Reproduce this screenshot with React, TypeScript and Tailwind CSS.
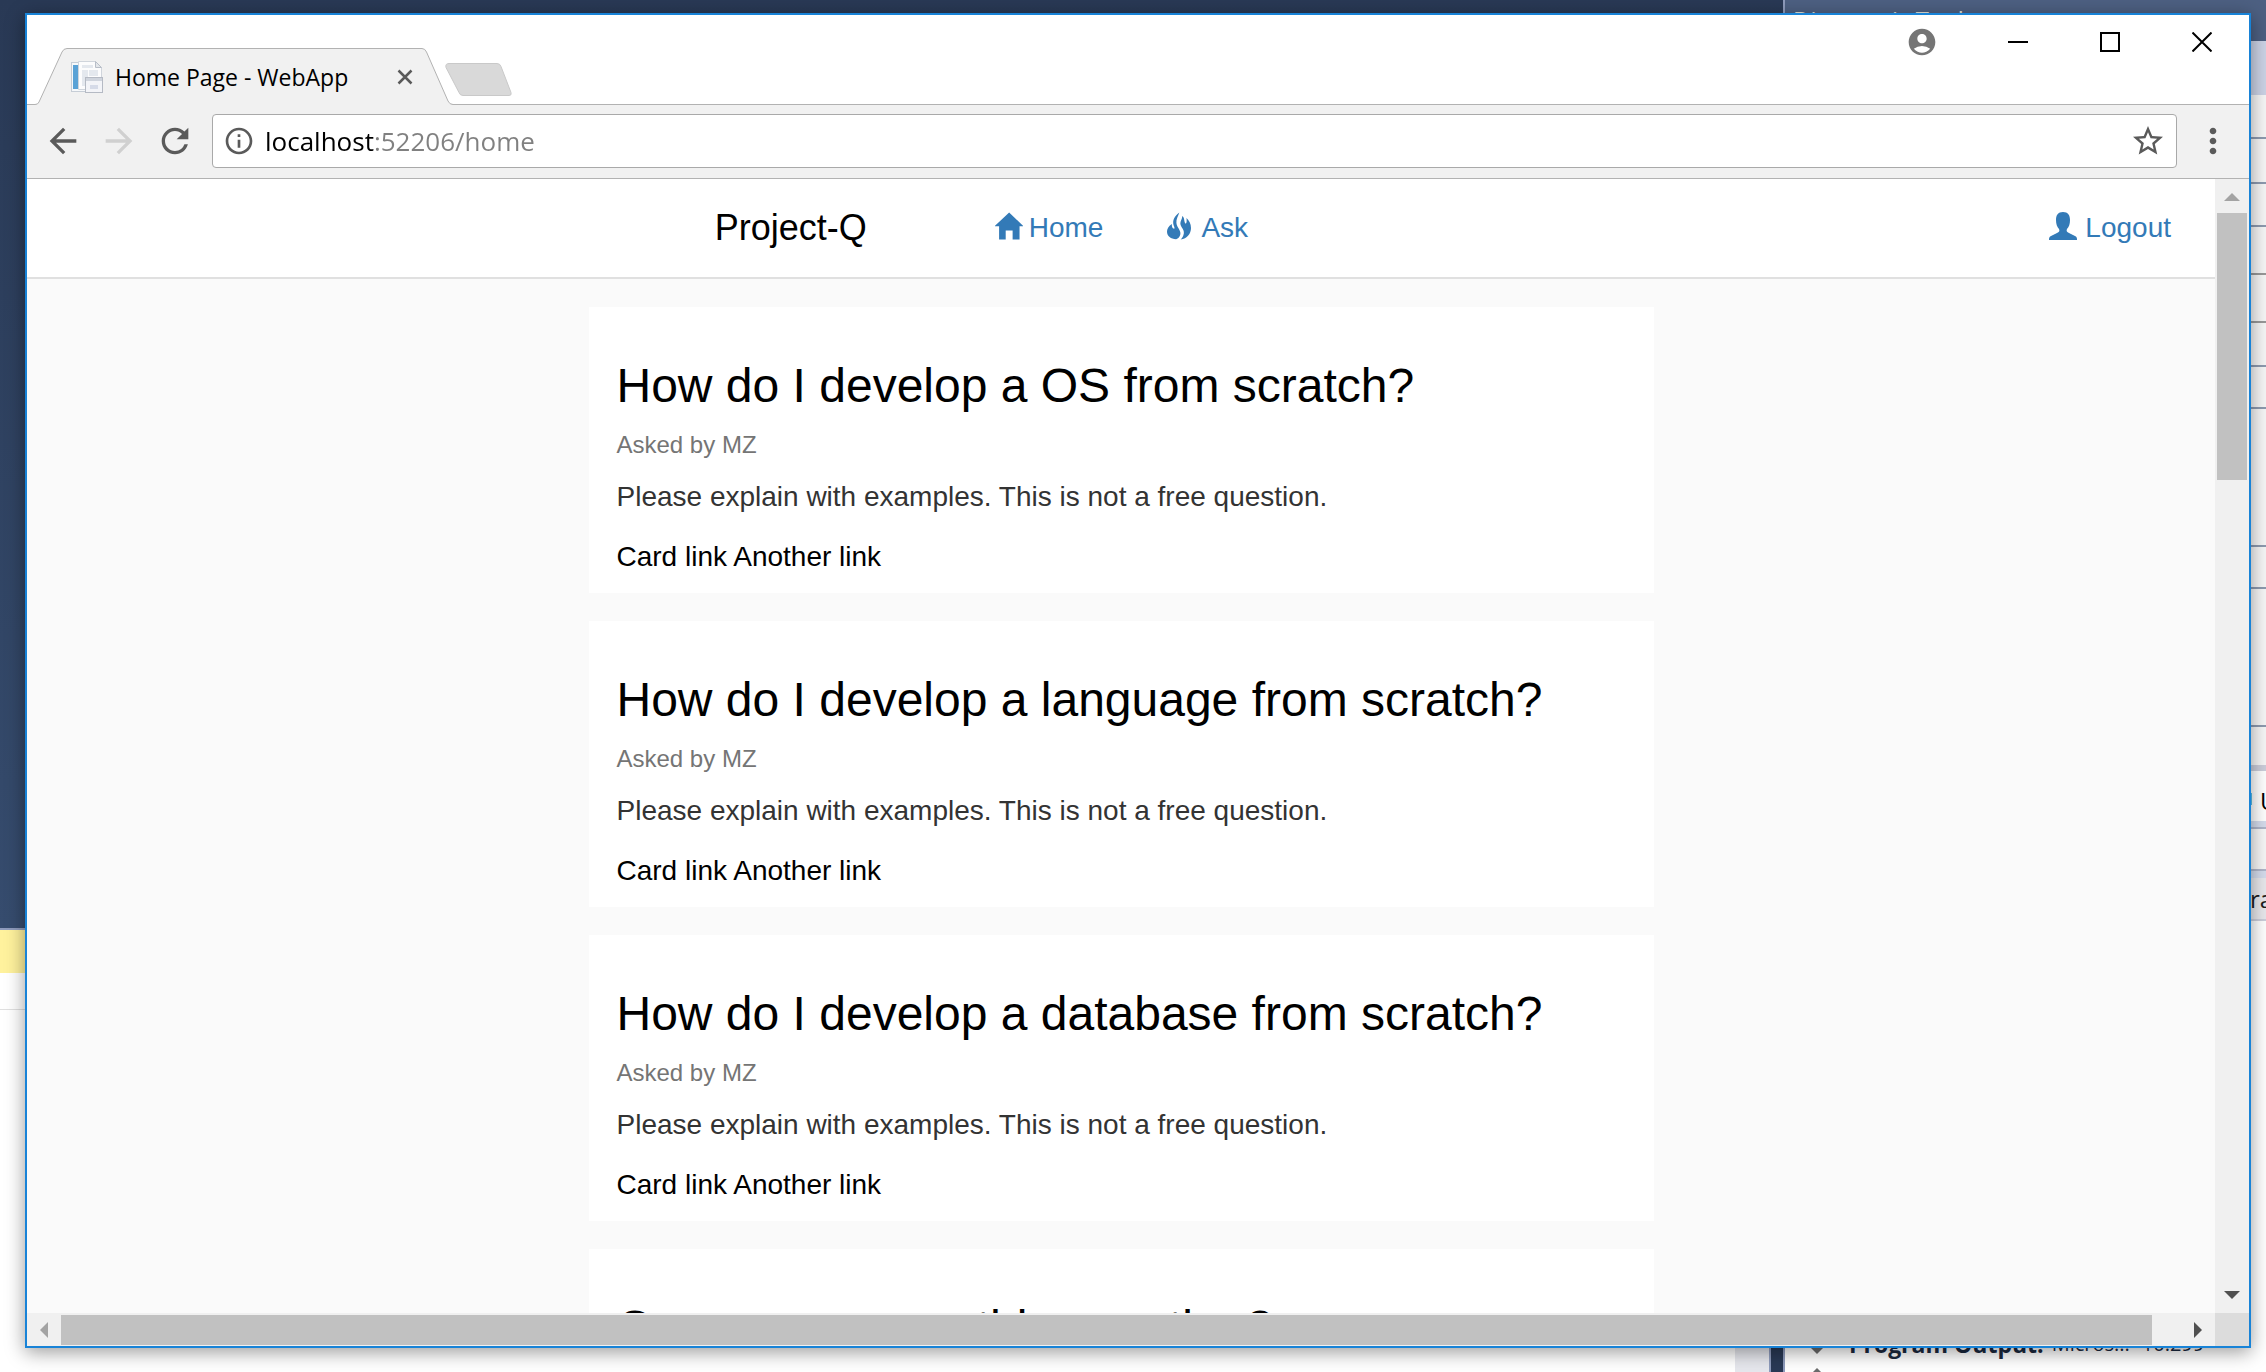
import React from "react";
import {
  MdAccountCircle,
  MdArrowBack,
  MdArrowForward,
  MdInfoOutline,
  MdMoreVert,
  MdRefresh,
  MdStarBorder,
} from "react-icons/md";

const questions = [
  "How do I develop a OS from scratch?",
  "How do I develop a language from scratch?",
  "How do I develop a database from scratch?",
  "Can you answer this question?",
];

function HomeIcon() {
  return (
    <svg viewBox="0 0 89 86" className="mb-1 h-7 w-7 shrink-0" fill="currentColor" aria-hidden="true">
      <path d="M45 0 89 42v2H78v42H56V57H34v29H13V44H0v-2z" />
    </svg>
  );
}

function FireIcon() {
  return (
    <svg viewBox="0 0 74 84" className="mb-1 h-7 w-6 shrink-0" fill="currentColor" aria-hidden="true">
      <path d="M38 0C22 12 17 24 20 38c1 5 4 8 3 12-6 1-9-5-8-14C4 43 0 52 0 60c0 14 12 22 28 23 9-4 15-12 13-22C39 51 30 45 29 32 28 20 34 12 38 0z" />
      <path d="M47 11c0 11-8 17-5 28 3 9 11 14 10 25-1 9-6 15-10 20 20-4 32-18 32-36 0-14-6-24-14-31 1 8 1 14-2 18-4-2-4-7-5-12-1-6-2-9-6-12z" />
    </svg>
  );
}

function UserIcon() {
  return (
    <svg viewBox="0 0 28 28" className="mb-1 h-7 w-7 shrink-0" fill="currentColor" aria-hidden="true">
      <path d="M14 0C9 0 7 3 7 8c0 4 1 7 3 9 1 2 0 3-2 4l-6 3c-2 1-2 2-2 4h28c0-2 0-3-2-4l-6-3c-2-1-3-2-2-4 2-2 3-5 3-9 0-5-2-8-7-8z" />
    </svg>
  );
}

function Favicon() {
  return (
    <svg viewBox="0 0 32 32" className="size-8 shrink-0" aria-hidden="true">
      <rect x="0.5" y="1.5" width="20" height="29" fill="#f6f8fa" stroke="#c6cdd6" />
      <rect x="2" y="4" width="6" height="24" fill="#5aa2d6" />
      <path d="M7.500.5h17l6 6v22h-23z" fill="#fcfcfd" stroke="#d0d5dc" />
      <path d="M24.500.5v6h6z" fill="#e3e6ea" stroke="#b8bec8" />
      <path d="M11 4h11v3H11zM11 9h6v16h-6zM18 9h9v6h-9z" fill="#e4e8ee" />
      <rect x="14.500" y="16.500" width="17" height="15" fill="#f3f4f8" stroke="#b5bac4" />
      <rect x="15" y="17" width="16" height="3" fill="#cfd4dd" />
      <rect x="19" y="24" width="8" height="4" fill="#d6dbe8" />
    </svg>
  );
}

function TitleBar() {
  return (
    <header className="flex h-[90px] shrink-0 justify-between bg-white shadow-[inset_0_-1px_0_#b2b2b2]">
      <div className="flex items-end">
        <div className="relative flex h-[57px] w-[426px] items-center pr-8 pl-11">
          <svg viewBox="0 0 426 57" className="absolute inset-0 h-full w-full" aria-hidden="true">
            <path
              d="M0 57v-.5h8q3 0 4-2.500L35 4q1.500-3.500 5-3.500h355q3 0 4.500 3.500L421 53q1.500 3.500 5 3.500v.5z"
              fill="#f1f1f1"
            />
            <path
              d="M0 56.500h8q3 0 4-2.500L35 4q1.500-3.500 5-3.500h355q3 0 4.500 3.500L421 53q1.500 3.500 5 3.500"
              fill="none"
              stroke="#b2b2b2"
            />
          </svg>
          <div className="relative flex w-full items-center">
            <Favicon />
            <span className="ml-3 text-[23px] leading-8 text-black">Home Page - WebApp</span>
            <button type="button" aria-label="Close tab" className="ml-auto flex size-8 items-center justify-center">
              <svg viewBox="0 0 16 16" className="size-4" stroke="#5a5a5a" strokeWidth="2.500" aria-hidden="true">
                <path d="M1.500 1.500l13 13M14.500 1.500l-13 13" />
              </svg>
            </button>
          </div>
        </div>
        <button type="button" aria-label="New tab" className="-ml-2 mb-2">
          <svg viewBox="0 0 68 34" className="h-[34px] w-[68px]" aria-hidden="true">
            <path
              d="M4 .5h48q3 0 4 3l10 26q1 3-2 3H18q-3 0-4-3L1 4.500Q0 .5 4 .5z"
              fill="#d9d9d9"
              stroke="#c9c9c9"
            />
          </svg>
        </button>
      </div>
      <div className="flex h-[54px] items-center pr-px">
        <button type="button" aria-label="Profile" className="flex w-[100px] justify-center">
          <MdAccountCircle className="size-8 text-[#757575]" />
        </button>
        <button type="button" aria-label="Minimize" className="flex w-[92px] justify-center">
          <svg viewBox="0 0 20 20" className="size-5" stroke="#000" strokeWidth="2" aria-hidden="true">
            <path d="M0 10h20" />
          </svg>
        </button>
        <button type="button" aria-label="Maximize" className="flex w-[92px] justify-center">
          <svg viewBox="0 0 20 20" className="size-5" stroke="#000" strokeWidth="2" fill="none" aria-hidden="true">
            <path d="M1 1h18v18H1z" />
          </svg>
        </button>
        <button type="button" aria-label="Close" className="flex w-[92px] justify-center">
          <svg viewBox="0 0 20 20" className="size-5" stroke="#000" strokeWidth="2" aria-hidden="true">
            <path d="M.5.5l19 19M19.500.5l-19 19" />
          </svg>
        </button>
      </div>
    </header>
  );
}

function Toolbar() {
  return (
    <div className="flex h-[74px] shrink-0 items-center border-b border-[#b2b2b2] bg-[#f1f1f1] px-2 pb-0.5 text-[#5a5a5a]">
      <button type="button" aria-label="Back" className="flex w-14 justify-center">
        <MdArrowBack className="size-10" />
      </button>
      <button type="button" aria-label="Forward" disabled className="flex w-14 justify-center text-[#d0d0d0]">
        <MdArrowForward className="size-10" />
      </button>
      <button type="button" aria-label="Reload" className="flex w-14 justify-center">
        <MdRefresh className="size-10" />
      </button>
      <div className="mr-2 ml-[9px] flex h-[54px] flex-1 items-center rounded-[4px] border border-[#a9a9a9] bg-white px-2.5">
        <MdInfoOutline className="size-8 shrink-0" />
        <input
          type="text"
          aria-label="Address"
          defaultValue="localhost:52206/home"
          className="ml-2.5 min-w-0 flex-1 bg-[linear-gradient(90deg,#000_109px,#808080_109px)] bg-clip-text text-[26px] leading-10 text-transparent outline-none"
        />
        <button type="button" aria-label="Bookmark this page">
          <MdStarBorder className="size-9" />
        </button>
      </div>
      <button type="button" aria-label="Menu" className="flex w-14 justify-center">
        <MdMoreVert className="size-10" />
      </button>
    </div>
  );
}

function NavBar() {
  return (
    <nav className="grid h-[100px] shrink-0 grid-cols-[11fr_24fr] border-b-2 border-[#e0e0e0] bg-white">
      <div />
      <div className="flex items-center pr-11 text-[28px] leading-10 text-[#337ab7]">
        <a href="#" className="mr-32 text-4xl text-black">
          Project-Q
        </a>
        <a href="#home" className="mr-16 flex items-center gap-1.5">
          <HomeIcon />
          Home
        </a>
        <a href="#ask" className="flex items-center gap-2.5">
          <FireIcon />
          Ask
        </a>
        <a href="#logout" className="ml-auto flex items-center gap-2">
          <UserIcon />
          Logout
        </a>
      </div>
    </nav>
  );
}

function QuestionCard({ title }: { title: string }) {
  return (
    <article className="shrink-0 bg-white px-7 pt-[52px] pb-4 text-[28px] leading-10">
      <h1 className="text-5xl leading-[54px] text-black">{title}</h1>
      <p className="mt-4 text-2xl leading-8 text-[#757575]">Asked by MZ</p>
      <p className="mt-4 text-[#333333]">Please explain with examples. This is not a free question.</p>
      <p className="mt-5 text-black">
        <a href="#card">Card link</a> <a href="#another">Another link</a>
      </p>
    </article>
  );
}

function VerticalScrollbar() {
  return (
    <div className="flex w-[34px] shrink-0 flex-col items-center bg-[#f0f0f0]">
      <svg viewBox="0 0 34 34" className="size-[34px]" fill="#a3a3a3" aria-hidden="true">
        <path d="M9 22 17 14l8 8z" />
      </svg>
      <div className="h-[267px] w-[30px] bg-[#c1c1c1]" />
      <svg viewBox="0 0 34 34" className="mt-auto size-[34px]" fill="#505050" aria-hidden="true">
        <path d="M9 12h16l-8 8z" />
      </svg>
    </div>
  );
}

function HorizontalScrollbar() {
  return (
    <div className="flex h-[33px] shrink-0 bg-[#f0f0f0]">
      <svg viewBox="0 0 34 34" className="size-[34px] shrink-0" fill="#a3a3a3" aria-hidden="true">
        <path d="M21 9v16l-8-8z" />
      </svg>
      <div className="mt-0.5 mr-[29px] h-[30px] flex-1 bg-[#c1c1c1]" />
      <svg viewBox="0 0 34 34" className="size-[34px] shrink-0" fill="#505050" aria-hidden="true">
        <path d="M13 9v16l8-8z" />
      </svg>
      <div className="w-[34px] shrink-0 bg-[#dcdcdc]" />
    </div>
  );
}

function BrowserWindow() {
  return (
    <div className="absolute top-[13px] right-[15px] bottom-6 left-[25px] flex flex-col border-2 border-[#1883d7] bg-white shadow-[0_4px_18px_rgba(0,0,0,0.4)]">
      <TitleBar />
      <Toolbar />
      <div className="flex min-h-0 flex-1">
        <div className="flex min-w-0 flex-1 flex-col overflow-hidden bg-[#fafafa] font-['Liberation_Sans',Arial,sans-serif]">
          <NavBar />
          <main className="mx-auto flex min-h-0 w-full max-w-[1065px] flex-1 flex-col gap-7 overflow-hidden pt-7">
            {questions.map((title) => (
              <QuestionCard key={title} title={title} />
            ))}
          </main>
        </div>
        <VerticalScrollbar />
      </div>
      <HorizontalScrollbar />
    </div>
  );
}

function BackgroundRows() {
  return (
    <div className="flex flex-1 flex-col items-end bg-white text-2xl leading-8 text-[#1e1e1e]">
      <div className="h-[54px] w-full bg-[#ccd3e6]" />
      <div className="flex w-5 flex-col bg-[#f7f7f7]">
        <div className="h-11 border-b-2 border-[#8e9bb0]" />
        <div className="h-[45px] border-b-2 border-[#8e9bb0]" />
        <div className="h-[43px] border-b-2 border-[#8e9bb0]" />
        <div className="h-12 border-b-2 border-[#999999]" />
        <div className="h-12 border-b-2 border-[#999999]" />
        <div className="h-11 border-b-2 border-[#8e9bb0]" />
        <div className="h-[42px] border-b-2 border-[#8e9bb0]" />
        <div className="h-[138px] border-b-2 border-[#8e9bb0]" />
        <div className="h-[42px] border-b-2 border-[#8e9bb0]" />
        <div className="h-[138px] border-b-2 border-[#8e9bb0]" />
        <div className="h-11 border-b-[6px] border-[#cccedb]" />
        <div className="flex h-[58px] items-center overflow-hidden border-b-2 border-[#b0b6ca] bg-white shadow-[inset_0_-6px_0_#d5dcec]">
          <span className="h-3 w-[6px] shrink-0 bg-[#5cc0e8]" />
          <span className="ml-2 pt-1 text-black">U</span>
        </div>
        <div className="h-[42px] border-b-2 border-[#b0b6ca]" />
        <div className="flex h-[50px] items-center overflow-hidden border-b-2 border-[#cccedb] bg-[#e8e8ec] pt-2 pl-1 shadow-[inset_0_7px_0_#d5dcec]">
          ra
        </div>
      </div>
      <div className="mt-auto flex w-full items-start gap-6 pl-6 whitespace-nowrap">
        <svg viewBox="0 0 16 40" className="h-10 w-4" fill="#6b6b6b" aria-hidden="true">
          <path d="M0 14h16l-8 8zM0 44l8-8 8 8z" />
        </svg>
        <p className="-mt-1 flex text-[23px] text-[#1b293e]">
          <b>Program Output:</b>
          <span className="ml-2 text-xl leading-8">Micros...</span>
          <span className="ml-3 text-xl leading-8">10.299</span>
        </p>
      </div>
    </div>
  );
}

function Desktop() {
  return (
    <div className="flex h-full">
      <div className="flex flex-1 flex-col bg-white">
        <div className="h-[930px] border-b-2 border-[#8e9bbc] bg-[linear-gradient(#293955,#364c6e)]" />
        <div className="h-[43px] bg-[#fff29d]" />
        <div className="h-[37px] border-b border-[#e0e0e0]" />
        <div className="flex flex-1 justify-end">
          <div className="w-[34px] bg-[#e6e7ed]" />
          <div className="w-3.5 border-l-2 border-[#8e9bbc] bg-[#293955]" />
        </div>
      </div>
      <div className="flex w-[483px] flex-col border-l-2 border-[#8e9bbc]">
        <div className="h-[41px] overflow-hidden bg-[#4d6082] pt-1 pl-2 text-2xl leading-8 text-[#e8e4d8]">
          Diagnostic Tools
        </div>
        <BackgroundRows />
      </div>
    </div>
  );
}

export default function App() {
  return (
    <div className="relative h-screen overflow-hidden bg-white font-['Open_Sans','Noto_Sans',sans-serif]">
      <Desktop />
      <BrowserWindow />
    </div>
  );
}
